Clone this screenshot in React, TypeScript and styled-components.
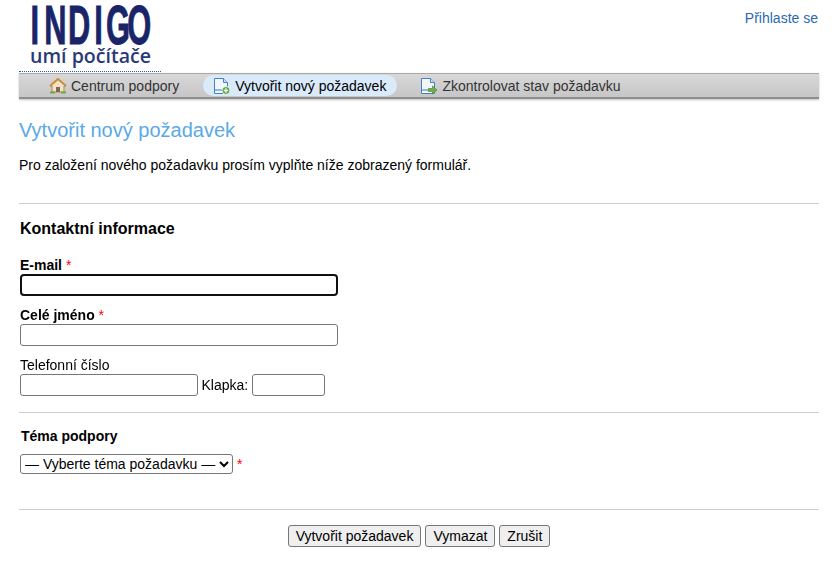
import React from 'react';
import styled, { createGlobalStyle } from 'styled-components';

const GlobalStyle = createGlobalStyle`
  html, body {
    margin: 0;
    padding: 0;
    background: #fff;
    color: #000;
    font-family: "Liberation Sans", Arial, sans-serif;
    font-size: 14px;
  }
`;

const Page = styled.div`
  width: 800px;
  margin-left: 19px;
`;

const Header = styled.div`
  display: flex;
  justify-content: space-between;
  align-items: flex-start;
  height: 72px;
  padding-right: 1px;
`;

const LogoBox = styled.div`
  width: 142px;
  height: 71px;
  border-bottom: 1px dotted #2a5aa8;
`;

const SignIn = styled.a`
  margin-top: 10px;
  color: #2a6ab0;
  font-size: 14px;
  line-height: 16px;
`;

const NavBar = styled.div`
  display: flex;
  align-items: center;
  height: 23px;
  margin-top: 1px;
  padding-left: 13px;
  border-top: 1px solid #a8a8a8;
  border-bottom: 2px solid #8f8f8f;
  background: linear-gradient(#d8d8d8, #c6c6c6);
  box-shadow: 0 1px 2px rgba(0, 0, 0, 0.25);
`;

const NavItem = styled.a<{ $active?: boolean }>`
  display: flex;
  align-items: center;
  gap: 4px;
  height: 21px;
  margin-right: ${p => (p.$active ? '6px' : '13px')};
  padding: 0 11px 0 ${p => (p.$active ? '10px' : '17px')};
  border-radius: 11px;
  background: ${p => (p.$active ? '#d9eafb' : 'transparent')};
  color: ${p => (p.$active ? '#000' : '#333')};
  font-size: 14px;
`;

const Title = styled.h1`
  margin: 19px 0 0;
  color: #5aa9e6;
  font-size: 20px;
  font-weight: 400;
  line-height: 24px;
`;

const Intro = styled.p`
  margin: 15px 0 0;
  font-size: 14px;
  line-height: 16px;
`;

const Rule = styled.hr<{ $top: number }>`
  margin: ${p => p.$top}px 0 0;
  border: 0;
  border-top: 1px solid #ccc;
`;

const SectionTitle = styled.h2`
  margin: 15px 0 0 1px;
  font-size: 16px;
  font-weight: 700;
  line-height: 20px;
`;

const Field = styled.div<{ $top: number }>`
  margin: ${p => p.$top}px 0 0 1px;
`;

const Label = styled.label<{ $bold?: boolean }>`
  display: block;
  font-size: 14px;
  line-height: 17px;
  font-weight: ${p => (p.$bold ? 700 : 400)};
`;

const Required = styled.span`
  color: #f00;
  font-weight: 400;
`;

const TextInput = styled.input<{ $width: number }>`
  display: inline-block;
  box-sizing: border-box;
  width: ${p => p.$width}px;
  height: 22px;
  margin: 0;
  padding: 1px 2px;
  vertical-align: top;
  font-family: "Liberation Sans", Arial, sans-serif;
  font-size: 14px;
  border: 1px solid #767676;
  border-radius: 3px;
  background: #fff;
`;

const PhoneRow = styled.div`
  display: flex;
  align-items: center;
  gap: 3.5px;
`;

const TopicHeading = styled.div`
  margin: 15px 0 0 2px;
  font-size: 14px;
  font-weight: 700;
  line-height: 16px;
`;

const TopicRow = styled.div`
  display: flex;
  align-items: center;
  gap: 4px;
  margin: 10px 0 0 1px;
`;

const TopicSelect = styled.select`
  box-sizing: border-box;
  width: 213px;
  height: 20px;
  padding: 0;
  font-family: "Liberation Sans", Arial, sans-serif;
  font-size: 14px;
  color: #000;
  background: #fff;
  border: 1px solid #767676;
  border-radius: 3px;
`;

const Actions = styled.div`
  display: flex;
  justify-content: center;
  gap: 4px;
  margin-top: 15px;
`;

const ActionButton = styled.button`
  box-sizing: border-box;
  height: 22px;
  padding: 0 7px;
  font-family: "Liberation Sans", Arial, sans-serif;
  font-size: 14px;
  color: #000;
  background: #efefef;
  border: 1px solid #767676;
  border-radius: 3px;
`;

const Logo = () => (
  <svg width="142" height="70" viewBox="0 0 142 70">
    <g transform="translate(0 44) scale(0.55 1)">
      <text
        x="21 46 89 137 158 197"
        y="0"
        fill="#1a2569"
        stroke="#1a2569"
        strokeWidth="1"
        fontFamily="'Liberation Sans', Arial, sans-serif"
        fontSize="56"
        fontWeight="700"
      >
        INDIGO
      </text>
    </g>
    <text
      x="11"
      y="63"
      fill="#2a3a78"
      fontFamily="'Open Sans', sans-serif"
      fontSize="19"
      fontWeight="600"
      textLength="121"
      lengthAdjust="spacingAndGlyphs"
    >
      umí počítače
    </text>
  </svg>
);

const HomeIcon = () => (
  <svg width="18" height="17" viewBox="0 0 18 17">
    <path d="M9 1.5 1 9h2v6h12V9h2z" fill="#f3e3c4" stroke="#b8854a" strokeWidth="1" strokeLinejoin="round" />
    <path d="M1 9 9 2l8 7" fill="none" stroke="#c98d3e" strokeWidth="2" strokeLinejoin="round" />
    <rect x="7" y="10" width="4" height="5" fill="#7a6a5a" />
    <path d="M1 15.5h5M12 15.5h5" stroke="#6aa84f" strokeWidth="2" />
  </svg>
);

const DocIcon = ({ kind }: { kind: 'plus' | 'arrow' }) => (
  <svg width="18" height="18" viewBox="0 0 18 18">
    <path d="M1.5 1.5h9l4 4v11h-13z" fill="#f2f7fd" stroke="#4a7fc0" strokeWidth="1" />
    <path d="M10.5 1.5v4h4" fill="#cfe0f4" stroke="#4a7fc0" strokeWidth="1" />
    <rect x="2" y="12" width="7" height="2" fill="#8fb8e6" />
    {kind === 'plus' ? (
      <>
        <circle cx="13" cy="13.5" r="4" fill="#5aa646" stroke="#fff" strokeWidth="0.8" />
        <path d="M13 11.3v4.4M10.8 13.5h4.4" stroke="#fff" strokeWidth="1.3" />
      </>
    ) : (
      <path d="M8.5 11.5h4V9l4.5 4-4.5 4v-2.5h-4z" fill="#6fb04e" stroke="#4d8a35" strokeWidth="0.7" />
    )}
  </svg>
);

export default function App() {
  return (
    <Page>
      <GlobalStyle />
      <Header>
        <LogoBox>
          <Logo />
        </LogoBox>
        <SignIn>Přihlaste se</SignIn>
      </Header>
      <NavBar>
        <NavItem>
          <HomeIcon />
          Centrum podpory
        </NavItem>
        <NavItem $active>
          <DocIcon kind="plus" />
          Vytvořit nový požadavek
        </NavItem>
        <NavItem>
          <DocIcon kind="arrow" />
          Zkontrolovat stav požadavku
        </NavItem>
      </NavBar>
      <Title>Vytvořit nový požadavek</Title>
      <Intro>Pro založení nového požadavku prosím vyplňte níže zobrazený formulář.</Intro>
      <Rule $top={30} />
      <SectionTitle>Kontaktní informace</SectionTitle>
      <Field $top={18}>
        <Label $bold>
          E-mail <Required>*</Required>
        </Label>
        <TextInput $width={318} autoFocus />
      </Field>
      <Field $top={11}>
        <Label $bold>
          Celé jméno <Required>*</Required>
        </Label>
        <TextInput $width={318} />
      </Field>
      <Field $top={11}>
        <Label>Telefonní číslo</Label>
        <PhoneRow>
          <TextInput $width={178} />
          <span>Klapka:</span>
          <TextInput $width={73} />
        </PhoneRow>
      </Field>
      <Rule $top={16} />
      <TopicHeading>Téma podpory</TopicHeading>
      <TopicRow>
        <TopicSelect defaultValue="">
          <option value="">— Vyberte téma požadavku —</option>
        </TopicSelect>
        <Required>*</Required>
      </TopicRow>
      <Rule $top={35} />
      <Actions>
        <ActionButton>Vytvořit požadavek</ActionButton>
        <ActionButton>Vymazat</ActionButton>
        <ActionButton>Zrušit</ActionButton>
      </Actions>
    </Page>
  );
}
